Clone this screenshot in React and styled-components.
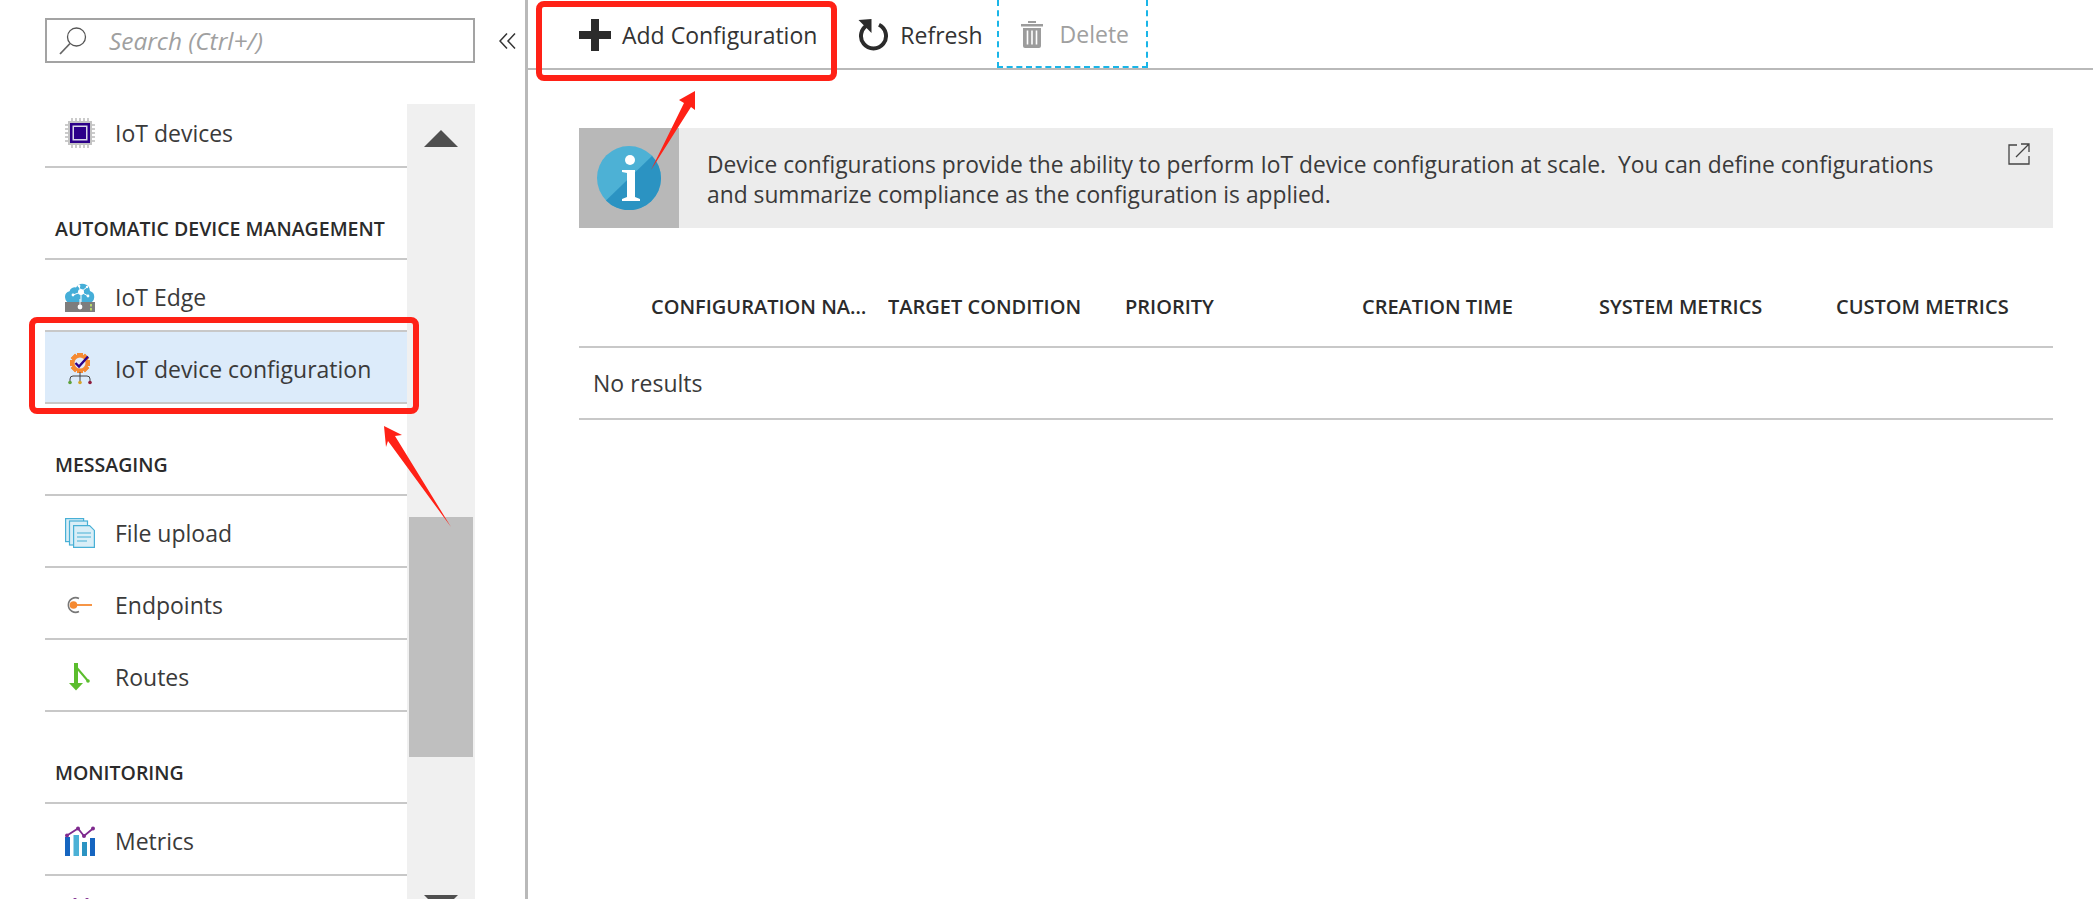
import styled, { createGlobalStyle } from "styled-components";

const GlobalStyle = createGlobalStyle`
  html, body {
    margin: 0;
    height: 899px;
    overflow: hidden;
    background: #fff;
    font-family: "Open Sans", "Noto Sans", sans-serif;
    color: #333;
  }
  * { box-sizing: border-box; }
`;

const ChipIcon = () => (
  <svg width="30" height="30" viewBox="0 0 30 30">
    <g stroke="#a9a9a9" strokeWidth="1.2">
      {[6, 10, 14, 18, 22].map((p) => (
        <g key={p}>
          <path d={`M${p + 1} 0v30`} />
          <path d={`M0 ${p + 1}h30`} />
        </g>
      ))}
    </g>
    <rect x="3" y="3" width="24" height="24" fill="#c3c3c3" />
    <rect x="5" y="5" width="20" height="20" fill="#2c0089" />
    <rect x="7.5" y="7.5" width="15" height="15" fill="#d9d9e8" />
    <rect x="9" y="9" width="12" height="12" fill="#2c0089" />
  </svg>
);

const EdgeIcon = () => (
  <svg width="30" height="30" viewBox="0 0 30 30">
    <path d="M6 21a6 6 0 0 1-1.500-11.800A5.500 5.500 0 0 1 11 5.500A7.500 7.500 0 0 1 25 9A6.200 6.200 0 0 1 24 21z" fill="#45aed8" />
    <g stroke="#fff" strokeWidth="1">
      <path d="M16 10L8 13M16 10l7 4M16 10l-2-6M16 10v10M16 10l6-5" />
    </g>
    <g fill="#fff">
      <circle cx="16" cy="10" r="3" />
      <circle cx="8" cy="13" r="1.400" />
      <circle cx="23" cy="14" r="1.400" />
      <circle cx="14" cy="4" r="1.400" />
      <circle cx="22" cy="5" r="1.200" />
    </g>
    <rect x="0" y="20" width="30" height="10" fill="#7d7d7d" />
    <path d="M15 17v8" stroke="#fff" strokeWidth="1" />
    <circle cx="15" cy="25" r="2.400" fill="#fff" />
    <rect x="25" y="22" width="2" height="2.500" fill="#b7d66a" />
    <rect x="25" y="26" width="2" height="2.500" fill="#b7d66a" />
  </svg>
);

const ConfigIcon = () => (
  <svg width="30" height="32" viewBox="0 0 30 32">
    <g fill="#f58a32">
      {[0, 45, 90, 135, 180, 225, 270, 315].map((a) => (
        <rect key={a} x="12" y="0" width="6" height="20" transform={`rotate(${a} 15 10)`} />
      ))}
      <circle cx="15" cy="10" r="8" />
    </g>
    <circle cx="15" cy="10" r="5.500" fill="#e6edf8" />
    <path d="M10.500 10l3.500 3.500L23 3.500" fill="none" stroke="#2c0089" strokeWidth="2.400" />
    <path d="M5 29v-3a3 3 0 0 1 3-3h14a3 3 0 0 1 3 3v3M15 19v10" fill="none" stroke="#444" strokeWidth="1" />
    <circle cx="5" cy="29.500" r="1.800" fill="#5da33c" />
    <circle cx="15" cy="29.500" r="1.800" fill="#d6a52a" />
    <circle cx="25" cy="29.500" r="1.800" fill="#8e1b3c" />
  </svg>
);

const FilesIcon = () => (
  <svg width="30" height="30" viewBox="0 0 30 30">
    <g fill="#d9eef7" stroke="#48b0d6" strokeWidth="1.200">
      <rect x="0.600" y="0.600" width="18" height="23" />
      <rect x="4.500" y="3" width="18" height="24" />
      <path d="M8.600 7.600h16l4.800 4.800v17h-20.800z" />
    </g>
    <path d="M12 15h14M12 19h14M12 23h10" stroke="#48b0d6" strokeWidth="1.200" />
  </svg>
);

const EndpointIcon = () => (
  <svg width="30" height="20" viewBox="0 0 30 20">
    <path d="M14 3.500a7.300 7.300 0 1 0 0 13" fill="none" stroke="#777" strokeWidth="1.600" />
    <circle cx="8.500" cy="10" r="3.800" fill="#f58a32" />
    <path d="M8.500 10H27" stroke="#f58a32" strokeWidth="1.800" />
  </svg>
);

const RoutesIcon = () => (
  <svg width="22" height="28" viewBox="0 0 22 28">
    <path d="M7 0v22" stroke="#5bbd2d" strokeWidth="4" />
    <path d="M0 20h14l-7 7.500z" fill="#5bbd2d" />
    <path d="M8 5l11 13" stroke="#5bbd2d" strokeWidth="2" />
    <circle cx="19" cy="18" r="1.800" fill="#5bbd2d" />
  </svg>
);

const MetricsIcon = () => (
  <svg width="30" height="30" viewBox="0 0 30 30">
    <rect x="0" y="11" width="5" height="19" fill="#1565c0" />
    <rect x="8.500" y="9" width="5.500" height="21" fill="#4bb1d6" />
    <rect x="17" y="16" width="5" height="14" fill="#2b93c2" />
    <rect x="25" y="12" width="5" height="18" fill="#1565c0" />
    <path d="M2 9.500L13 2.500l6 7.500L28 2.500" fill="none" stroke="#7f2a8e" strokeWidth="1.800" />
    <g fill="#7f2a8e">
      <circle cx="2" cy="9.500" r="2" />
      <circle cx="13" cy="2.500" r="2" />
      <circle cx="19" cy="10" r="2" />
      <circle cx="28" cy="2.500" r="2" />
    </g>
  </svg>
);

const DiagnosticsIcon = () => (
  <svg width="30" height="30" viewBox="0 0 30 30">
    <circle cx="10" cy="2" r="2" fill="#7f2a8e" />
    <circle cx="22" cy="2" r="2" fill="#7f2a8e" />
  </svg>
);

const SearchIcon = () => (
  <svg width="28" height="28" viewBox="0 0 28 28">
    <circle cx="17.500" cy="10" r="9" fill="none" stroke="#555" strokeWidth="1.300" />
    <path d="M11 16.500L1 27" stroke="#666" strokeWidth="1.800" />
  </svg>
);

const ChevronsIcon = () => (
  <svg width="17" height="16" viewBox="0 0 17 16">
    <path d="M8 0.500L1 8l7 7.500M16 0.500L9 8l7 7.500" fill="none" stroke="#333" strokeWidth="1.500" />
  </svg>
);

const PlusIcon = () => (
  <svg width="32" height="32" viewBox="0 0 32 32">
    <path d="M12 0h8v12h12v8H20v12h-8V20H0v-8h12z" fill="#2b2b2b" />
  </svg>
);

const RefreshIcon = () => (
  <svg width="31" height="32" viewBox="0 0 31 32">
    <path d="M21 5.800A12.500 12.500 0 1 1 10 5.800" fill="none" stroke="#2b2b2b" strokeWidth="4" />
    <path d="M0.500 1L13.500 0v14z" fill="#2b2b2b" />
  </svg>
);

const TrashIcon = () => (
  <svg width="22" height="27" viewBox="0 0 22 27">
    <path d="M0 3h22v2.500H0zM7 0h8v2H7z" fill="#9c9c9c" />
    <path d="M2 7h18v18a2 2 0 0 1-2 2H4a2 2 0 0 1-2-2z" fill="#9c9c9c" />
    <path d="M6.500 9.500v14M11 9.500v14M15.500 9.500v14" stroke="#fff" strokeWidth="1.600" />
  </svg>
);

const InfoIcon = () => (
  <svg width="64" height="64" viewBox="0 0 64 64">
    <circle cx="32" cy="32" r="32" fill="#4db1d5" />
    <path d="M55 10A32 32 0 0 1 9 54.500z" fill="#2b93c2" />
    <circle cx="33" cy="14" r="5" fill="#fff" />
    <path d="M25 24h13v27l5 2v2H25v-2l5-2V27l-5-1z" fill="#fff" />
  </svg>
);

const ExternalIcon = () => (
  <svg width="22" height="22" viewBox="0 0 22 22">
    <path d="M9 2H1v19h20v-8" fill="none" stroke="#444" strokeWidth="1.300" />
    <path d="M8 14L21 1M13 1h8v8" fill="none" stroke="#444" strokeWidth="1.300" />
  </svg>
);

const Page = styled.div`
  position: relative;
  display: flex;
  width: 2093px;
  height: 899px;
  overflow: hidden;
`;

const Sidebar = styled.aside`
  flex: 0 0 528px;
  height: 899px;
  padding: 18px 0 0 45px;
  border-right: 3px solid #b9b9b9;
  overflow: hidden;
`;

const SearchRow = styled.div`
  display: flex;
  align-items: center;
  gap: 24px;
`;

const SearchBox = styled.div`
  display: flex;
  align-items: center;
  width: 430px;
  height: 45px;
  padding-left: 12px;
  gap: 22px;
  border: 2px solid #a3a3a3;
  font-size: 24.4px;
  font-style: italic;
  color: #a0a0a0;
`;

const Collapse = styled.span`
  display: flex;
`;

const Menu = styled.div`
  display: flex;
  width: 430px;
  height: 795px;
  margin-top: 41px;
`;

const MenuList = styled.div`
  flex: 0 0 362px;
  margin-top: -8px;
`;

const MenuItem = styled.div`
  position: relative;
  display: flex;
  align-items: center;
  height: 72px;
  padding-top: 4px;
  border-bottom: 2px solid #c8c8c8;
  background: ${({ $active }) => ($active ? "#dcebfa" : "transparent")};
  ${({ $active }) => $active && "box-shadow: 0 -2px 0 #c8c8c8;"}
  font-size: 23px;
  color: #3a3a3a;
`;

const IconSlot = styled.span`
  display: flex;
  flex: 0 0 70px;
  justify-content: center;
`;

const SectionTitle = styled.div`
  display: flex;
  align-items: flex-end;
  height: 92px;
  padding: 0 0 16px 10px;
  border-bottom: 2px solid #c8c8c8;
  font-size: 19.5px;
  font-weight: 600;
  color: #2b2b2b;
`;

const Scrollbar = styled.div`
  flex: 0 0 68px;
  display: flex;
  flex-direction: column;
  align-items: center;
  background: #f0f0f0;
`;

const Triangle = styled.span`
  width: 0;
  height: 0;
  margin-top: ${({ $down }) => ($down ? "138px" : "26px")};
  border-left: 17px solid transparent;
  border-right: 17px solid transparent;
  ${({ $down }) =>
    $down ? "border-top: 17px solid #4f4f4f;" : "border-bottom: 17px solid #4f4f4f;"}
`;

const Thumb = styled.div`
  flex: 0 0 240px;
  width: 64px;
  margin-top: 370px;
  background: #bfbfbf;
`;

const Content = styled.main`
  flex: 1;
  min-width: 0;
`;

const Toolbar = styled.div`
  display: flex;
  height: 70px;
  padding-left: 51px;
  border-bottom: 2px solid #b9b9b9;
`;

const ToolButton = styled.div`
  display: flex;
  align-items: center;
  height: 68px;
  gap: 11px;
  padding: 2px 41px 0 0;
  font-size: 23px;
  color: ${({ $muted }) => ($muted ? "#a0a0a0" : "#333")};
`;

const DeleteButton = styled(ToolButton)`
  height: 68px;
  margin-left: -27px;
  padding: 2px 17px 0 22px;
  gap: 17px;
  border: 2px dashed #19b5e8;
  border-top: none;
`;

const Body = styled.div`
  padding: 58px 40px 0 51px;
`;

const Banner = styled.div`
  position: relative;
  display: flex;
  height: 100px;
  background: #ececec;
`;

const BannerIcon = styled.div`
  display: flex;
  flex: 0 0 100px;
  align-items: center;
  justify-content: center;
  background: #b8b8b8;
`;

const BannerText = styled.p`
  margin: 0;
  padding: 22px 0 0 28px;
  font-size: 22.8px;
  line-height: 30px;
  white-space: pre-wrap;
  color: #3a3a3a;
`;

const BannerLink = styled.span`
  position: absolute;
  top: 15px;
  right: 23px;
  display: flex;
`;

const HeaderRow = styled.div`
  display: grid;
  grid-template-columns: repeat(6, 237px);
  height: 120px;
  padding: 65px 0 0 72px;
  border-bottom: 2px solid #c8c8c8;
`;

const HeaderCell = styled.div`
  padding-right: 20px;
  overflow: hidden;
  white-space: nowrap;
  text-overflow: ellipsis;
  font-size: 20px;
  font-weight: 600;
  color: #2b2b2b;
`;

const EmptyRow = styled.div`
  display: flex;
  align-items: center;
  height: 72px;
  padding-left: 14px;
  border-bottom: 2px solid #c8c8c8;
  font-size: 23px;
  color: #3a3a3a;
`;

const RedBox = styled.div`
  position: absolute;
  border: 6px solid #ff2116;
  border-radius: 8px;
  pointer-events: none;
`;

const ConfigHighlight = styled(RedBox)`
  top: -15px;
  left: -16px;
  right: -12px;
  bottom: -12px;
`;

const AddHighlight = styled(RedBox)`
  top: 1px;
  left: 536px;
  width: 301px;
  height: 80px;
`;

const Arrow = styled.svg`
  position: absolute;
  top: 0;
  left: 0;
  pointer-events: none;
`;

const columns = [
  "CONFIGURATION NAME",
  "TARGET CONDITION",
  "PRIORITY",
  "CREATION TIME",
  "SYSTEM METRICS",
  "CUSTOM METRICS",
];

export default function App() {
  return (
    <>
      <GlobalStyle />
      <Page>
        <Sidebar>
          <SearchRow>
            <SearchBox>
              <SearchIcon />
              <span>Search (Ctrl+/)</span>
            </SearchBox>
            <Collapse>
              <ChevronsIcon />
            </Collapse>
          </SearchRow>
          <Menu>
            <MenuList>
              <MenuItem>
                <IconSlot><ChipIcon /></IconSlot>
                IoT devices
              </MenuItem>
              <SectionTitle>AUTOMATIC DEVICE MANAGEMENT</SectionTitle>
              <MenuItem>
                <IconSlot><EdgeIcon /></IconSlot>
                IoT Edge
              </MenuItem>
              <MenuItem $active>
                <IconSlot><ConfigIcon /></IconSlot>
                IoT device configuration
                <ConfigHighlight />
              </MenuItem>
              <SectionTitle>MESSAGING</SectionTitle>
              <MenuItem>
                <IconSlot><FilesIcon /></IconSlot>
                File upload
              </MenuItem>
              <MenuItem>
                <IconSlot><EndpointIcon /></IconSlot>
                Endpoints
              </MenuItem>
              <MenuItem>
                <IconSlot><RoutesIcon /></IconSlot>
                Routes
              </MenuItem>
              <SectionTitle>MONITORING</SectionTitle>
              <MenuItem>
                <IconSlot><MetricsIcon /></IconSlot>
                Metrics
              </MenuItem>
              <MenuItem>
                <IconSlot><DiagnosticsIcon /></IconSlot>
              </MenuItem>
            </MenuList>
            <Scrollbar>
              <Triangle />
              <Thumb />
              <Triangle $down />
            </Scrollbar>
          </Menu>
        </Sidebar>
        <Content>
          <Toolbar>
            <ToolButton>
              <PlusIcon />
              Add Configuration
            </ToolButton>
            <ToolButton>
              <RefreshIcon />
              Refresh
            </ToolButton>
            <DeleteButton $muted>
              <TrashIcon />
              Delete
            </DeleteButton>
          </Toolbar>
          <Body>
            <Banner>
              <BannerIcon><InfoIcon /></BannerIcon>
              <BannerText>
                {"Device configurations provide the ability to perform IoT device configuration at scale.  You can define configurations\nand summarize compliance as the configuration is applied."}
              </BannerText>
              <BannerLink><ExternalIcon /></BannerLink>
            </Banner>
            <HeaderRow>
              {columns.map((name) => (
                <HeaderCell key={name}>{name}</HeaderCell>
              ))}
            </HeaderRow>
            <EmptyRow>No results</EmptyRow>
          </Body>
        </Content>
        <AddHighlight />
        <Arrow width="2093" height="899" viewBox="0 0 2093 899">
          <polygon points="695,91 679,100 684,103 651,170 691,107 695,110" fill="#ff2116" />
          <polygon points="384,426 402,435 395,436 451,527 388,441 386,447" fill="#ff2116" />
        </Arrow>
      </Page>
    </>
  );
}
